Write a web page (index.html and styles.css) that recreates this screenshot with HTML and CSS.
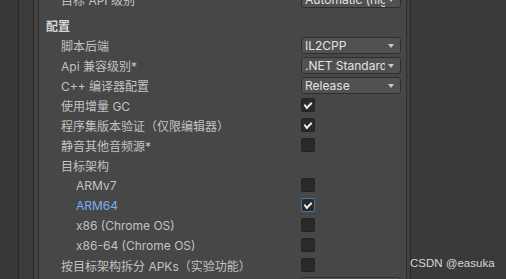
FILE: index.html
```html
<!DOCTYPE html>
<html lang="zh-CN">
<head>
  <meta charset="UTF-8" />
  <title>Player Settings - 配置</title>
  <link rel="stylesheet" href="styles.css">
</head>
<body>
  <div class="editor">
    <div class="gutter g1"></div>
    <div class="gutter g2"></div>
    <div class="gutter g3"></div>

    <div class="inspector">
      <div class="rows">
        <div class="row top">
          <span class="label">目标 API 级别</span>
          <div class="popup"><span>Automatic (highest installed)</span></div>
        </div>

        <div class="row header"><span class="label">配置</span></div>

        <div class="row">
          <span class="label">脚本后端</span>
          <div class="popup"><span>IL2CPP</span></div>
        </div>
        <div class="row">
          <span class="label">Api 兼容级别*</span>
          <div class="popup"><span>.NET Standard 2.1</span></div>
        </div>
        <div class="row">
          <span class="label">C++ 编译器配置</span>
          <div class="popup"><span>Release</span></div>
        </div>
        <div class="row">
          <span class="label">使用增量 GC</span>
          <div class="toggle checked"></div>
        </div>
        <div class="row">
          <span class="label">程序集版本验证（仅限编辑器）</span>
          <div class="toggle checked"></div>
        </div>
        <div class="row">
          <span class="label">静音其他音频源*</span>
          <div class="toggle"></div>
        </div>
        <div class="row">
          <span class="label">目标架构</span>
        </div>
        <div class="row sub">
          <span class="label">ARMv7</span>
          <div class="toggle"></div>
        </div>
        <div class="row sub">
          <span class="label focus">ARM64</span>
          <div class="toggle checked focused"></div>
        </div>
        <div class="row sub">
          <span class="label">x86 (Chrome OS)</span>
          <div class="toggle"></div>
        </div>
        <div class="row sub">
          <span class="label">x86-64 (Chrome OS)</span>
          <div class="toggle"></div>
        </div>
        <div class="row">
          <span class="label">按目标架构拆分 APKs（实验功能）</span>
          <div class="toggle"></div>
        </div>
        <div class="row">
          <span class="label">安装位置</span>
          <div class="popup"><span>Prefer External</span></div>
        </div>
      </div>
    </div>

    <div class="divider"></div>
    <div class="side"></div>
  </div>

  <div class="watermark">CSDN @easuka</div>
</body>
</html>
```

FILE: styles.css
```css
body { margin: 0; background: #393939; font-family: Inter, "Noto Sans CJK SC", sans-serif; font-size: 12px; overflow: hidden; }
.editor { display: flex; height: 279px; }

.gutter { height: 100%; }
.g1 { width: 18px; background: #373737; border-right: 1px solid #262626; }
.g2 { width: 14px; background: #3b3b3b; border-right: 1px solid #2a2a2a; }
.g3 { width: 4px; background: #424242; border-right: 1px solid #2c2c2c; }

.inspector { width: 367px; background: #474747; border-right: 1px solid #2f2f2f; overflow: hidden; }
.rows { margin-top: -11px; padding-left: 7px; }

.row { display: grid; grid-template-columns: 255px 100px; align-items: center; height: 20px; }
.row.top { margin-bottom: 6px; }
.label { padding-left: 15px; color: #c2c2c2; white-space: nowrap; }
.header .label { padding-left: 0; color: #d6d6d6; font-weight: bold; }
.sub .label { padding-left: 30px; }
.label.focus { color: #7aaef0; }

.popup { position: relative; height: 15px; line-height: 15px; background: #515151; border: 1px solid #2e2e2e; border-radius: 3px; padding: 0 15px 0 3px; color: #e2e2e2; overflow: hidden; white-space: nowrap; }
.popup span { display: block; overflow: hidden; }
.popup::after { content: ""; position: absolute; right: 6px; top: 6px; border-left: 3px solid transparent; border-right: 3px solid transparent; border-top: 4px solid #c8c8c8; }

.toggle { width: 12px; height: 12px; background: #2a2a2a; border: 1px solid #222; border-radius: 2px; position: relative; }
.toggle.checked::after { content: ""; position: absolute; left: 3px; top: 1px; width: 6px; height: 3px; border-left: 2px solid #eee; border-bottom: 2px solid #eee; transform: translate(-1px, 2px) rotate(-45deg) skewX(-8deg); }
.toggle.focused { border-color: #3a79bb; }

.divider { width: 3px; background: #404040; border-right: 1px solid #2a2a2a; }
.side { flex: 1; background: #3a3a3a; }

.watermark { position: absolute; left: 410px; top: 257px; color: #d6d6d6; font-family: "Liberation Sans", Arial, sans-serif; font-size: 11.5px; }
```
